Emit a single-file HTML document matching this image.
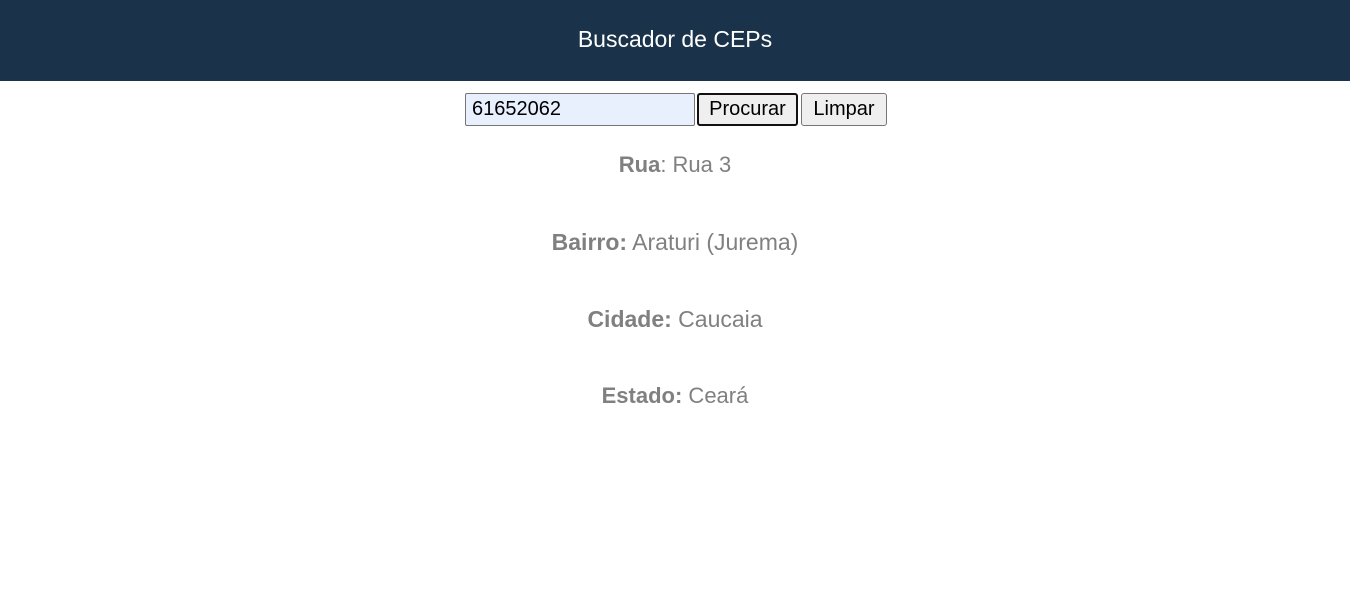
<!DOCTYPE html>
<html><head><style>
body{margin:0;background:#fff;font-family:"Liberation Sans",Arial,sans-serif;width:1350px;height:603px;position:relative;overflow:hidden}
header{height:81px;background:#1a334a;color:#fff;text-align:center;font-size:23px;line-height:78px}
.inp{position:absolute;left:465px;top:93px;border:1px solid #767676;border-radius:2px;background:#e8f0fe;font-size:20px;line-height:31px;padding-left:6px;box-sizing:border-box;width:230px;height:33px}
.btn{position:absolute;top:93px;height:33px;box-sizing:border-box;border:1px solid #767676;border-radius:3px;background:#efefef;font-size:20px;line-height:30px;text-align:center}
.l{position:absolute;left:0;width:1350px;text-align:center;font-size:22px;color:#808080;line-height:26px}
.w{font-size:23px}
</style></head><body>
<header>Buscador de CEPs</header>
<div class="inp">61652062</div>
<div class="btn" style="left:697px;width:101px;border:2px solid #111;line-height:28px">Procurar</div>
<div class="btn" style="left:801px;width:86px">Limpar</div>
<div class="l" style="top:152px"><b>Rua</b>: Rua 3</div>
<div class="l w" style="top:229px"><b>Bairro:</b> Araturi (Jurema)</div>
<div class="l w" style="top:306px"><b>Cidade:</b> Caucaia</div>
<div class="l" style="top:383px"><b>Estado:</b> Ceará</div>
</body></html>
